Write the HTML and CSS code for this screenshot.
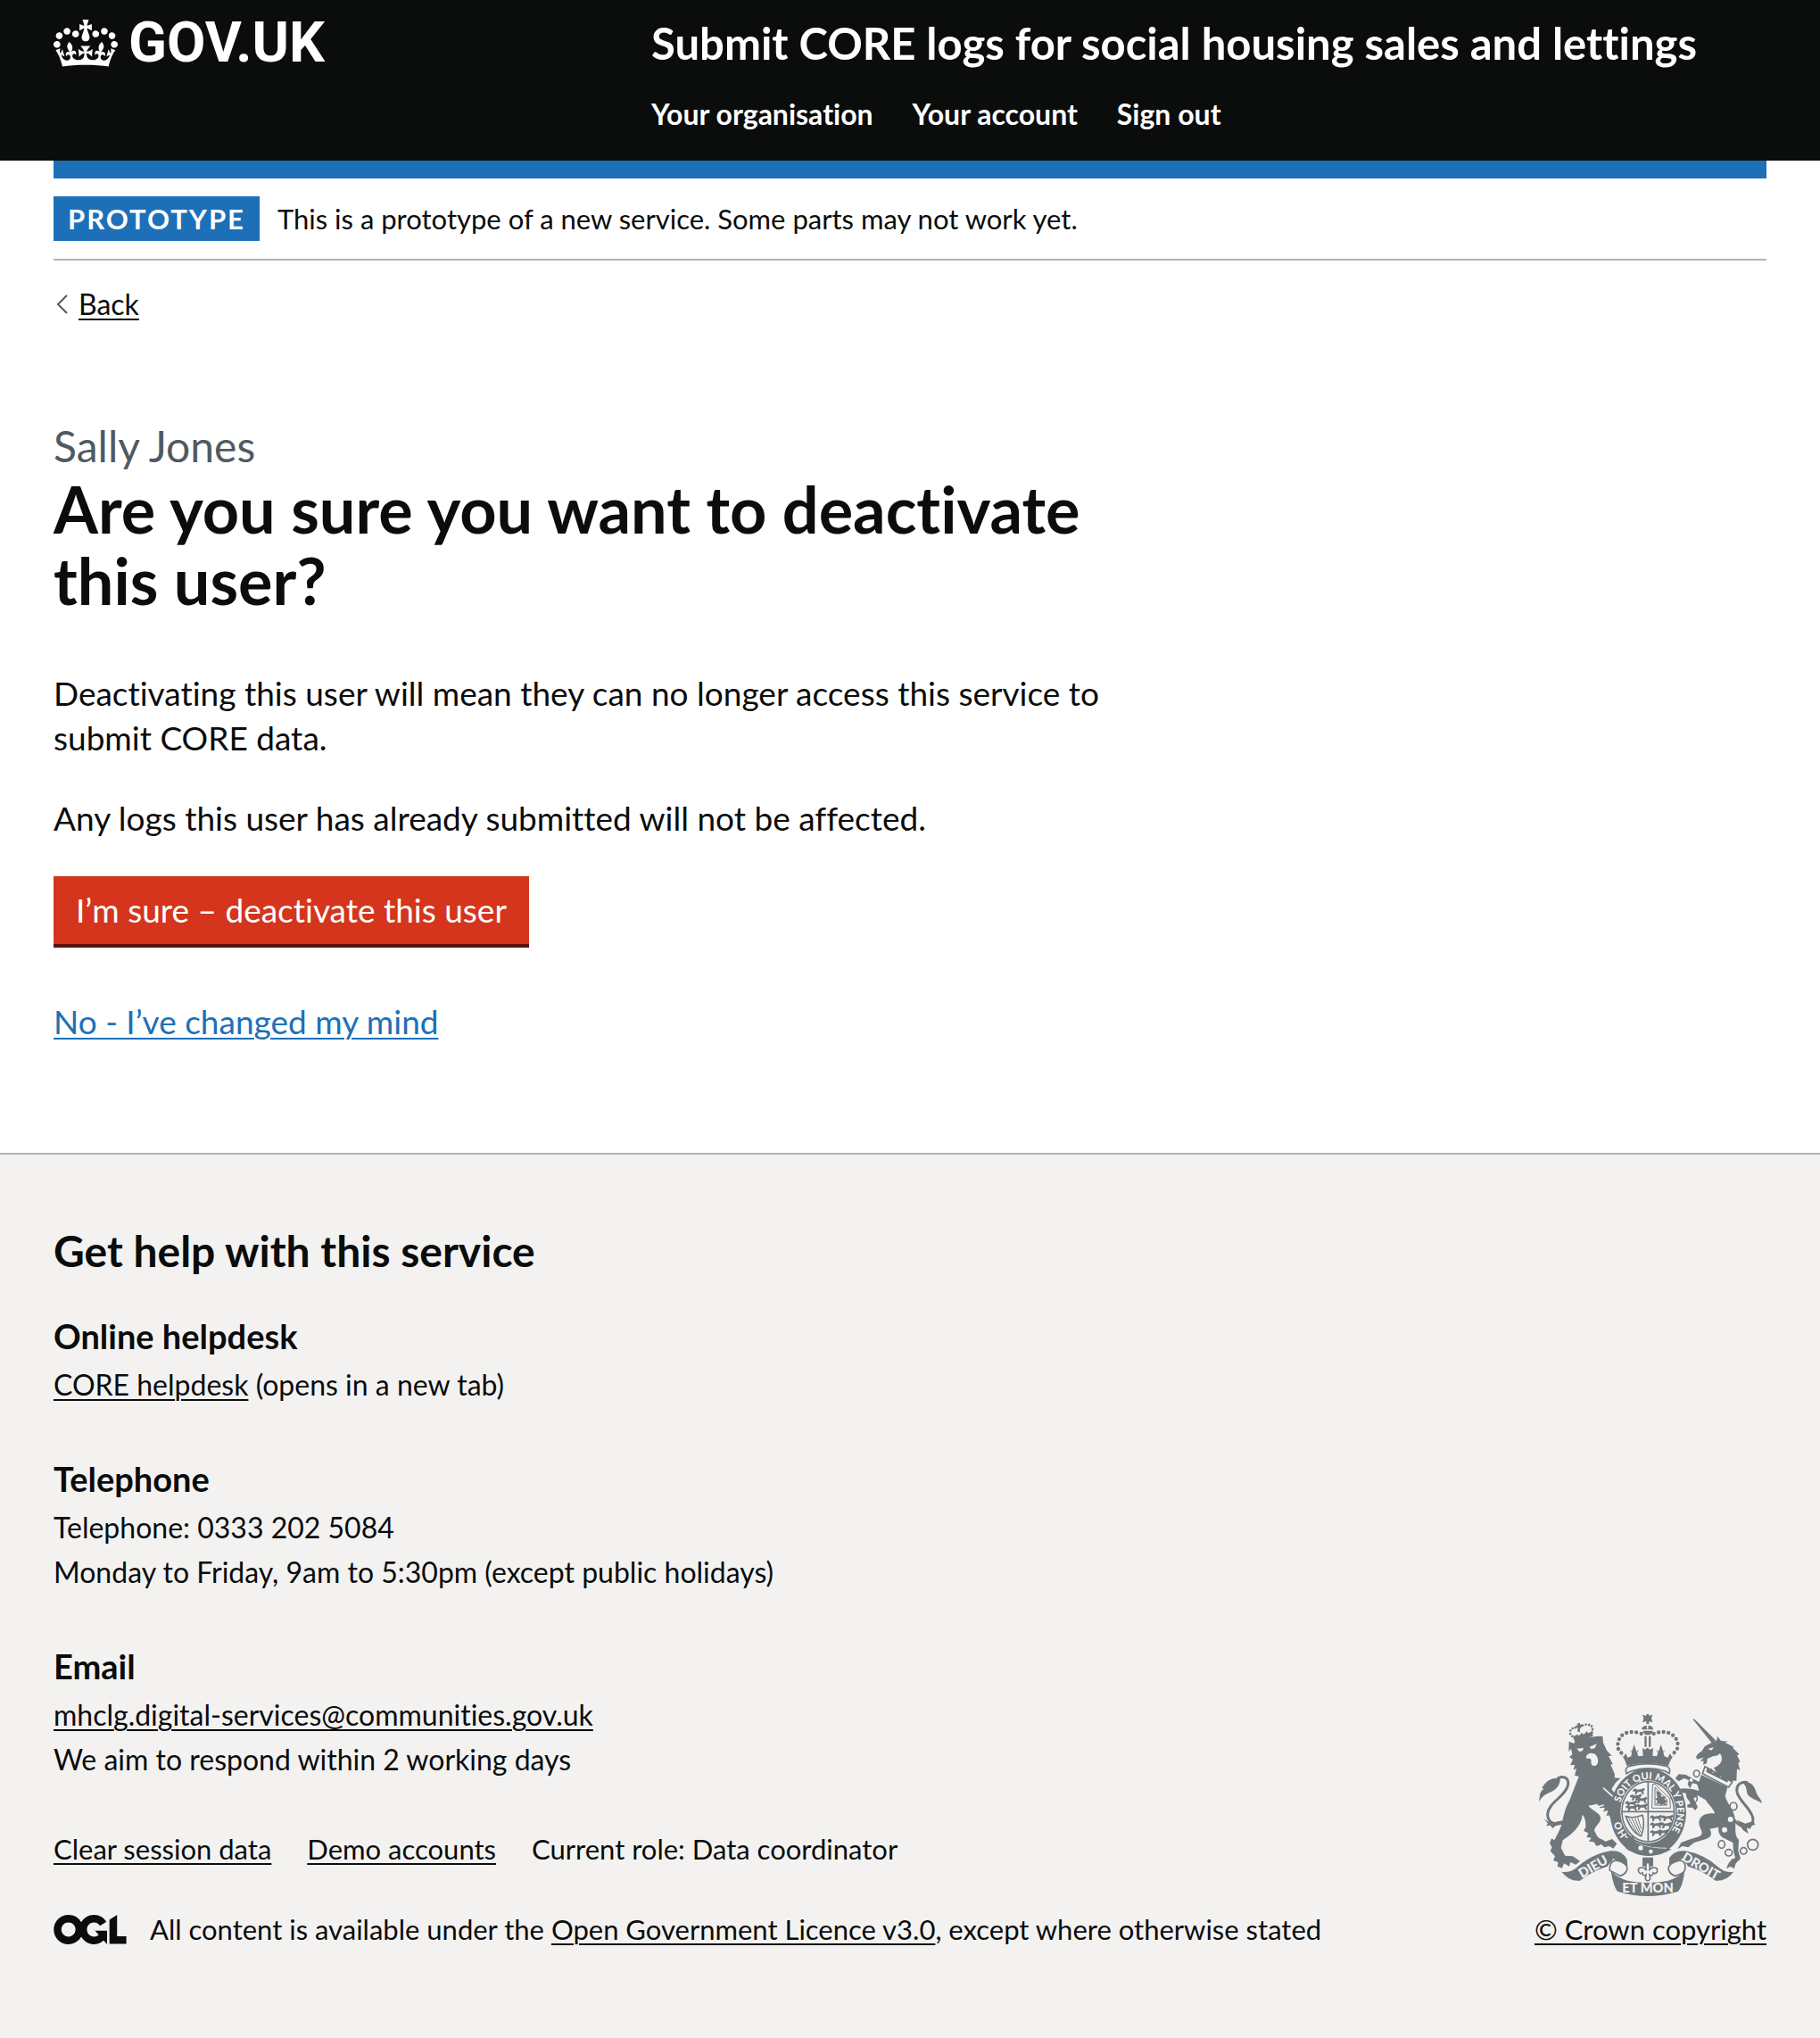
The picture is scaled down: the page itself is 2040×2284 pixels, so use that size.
FILE: index.html
```html
<!DOCTYPE html>
<html lang="en">
<head>
  <meta charset="utf-8">
  <meta name="viewport" content="width=device-width, initial-scale=1">
  <title>Are you sure you want to deactivate this user? - Submit CORE logs</title>
  <link rel="stylesheet" href="styles.css">
</head>
<body>
  <header class="header">
    <div class="header-inner">
      <a class="logo" href="#">
        <svg class="logo-crown" viewBox="0 0 132 97" aria-hidden="true"><path fill="currentColor" fill-rule="evenodd" d="M25 30.2c3.5 1.5 7.7-.2 9.1-3.7 1.5-3.6-.2-7.8-3.9-9.2-3.6-1.4-7.6.3-9.1 3.9-1.4 3.5.3 7.5 3.9 9zM9 39.5c3.6 1.5 7.8-.2 9.2-3.7 1.5-3.6-.2-7.8-3.9-9.1-3.6-1.5-7.6.2-9.1 3.8-1.4 3.5.3 7.5 3.8 9zM4.4 57.2c3.5 1.5 7.7-.2 9.1-3.8 1.5-3.6-.2-7.7-3.9-9.1-3.5-1.5-7.6.3-9.1 3.8-1.4 3.5.3 7.6 3.9 9.1zm38.3-21.4c3.5 1.5 7.7-.2 9.1-3.8 1.5-3.6-.2-7.7-3.9-9.1-3.6-1.5-7.6.3-9.1 3.8-1.3 3.6.4 7.7 3.9 9.1zm64.4-5.6c-3.6 1.5-7.8-.2-9.1-3.7-1.5-3.6.2-7.8 3.8-9.2 3.6-1.4 7.7.3 9.2 3.9 1.3 3.5-.4 7.5-3.9 9zm15.9 9.3c-3.6 1.5-7.7-.2-9.1-3.7-1.5-3.6.2-7.8 3.7-9.1 3.6-1.5 7.7.2 9.2 3.8 1.5 3.5-.3 7.5-3.8 9zm4.7 17.7c-3.6 1.5-7.8-.2-9.2-3.8-1.5-3.6.2-7.7 3.9-9.1 3.6-1.5 7.7.3 9.2 3.8 1.3 3.5-.4 7.6-3.9 9.1zM89.3 35.8c-3.6 1.5-7.8-.2-9.2-3.8-1.4-3.6.2-7.7 3.9-9.1 3.6-1.5 7.7.3 9.2 3.8 1.4 3.6-.3 7.7-3.9 9.1zM69.7 17.7l8.9 4.7V9.3l-8.9 2.8c-.2-.3-.5-.6-.9-.9L72.4 0H59.6l3.5 11.2c-.3.3-.6.5-.9.9l-8.8-2.8v13.1l8.8-4.7c.3.3.6.7.9.9l-5 15.4v.1c-.2.8-.4 1.6-.4 2.4 0 4.1 3.1 7.5 7 8.1h.2c.3 0 .7.1 1 .1.4 0 .7 0 1-.1h.2c4-.6 7.1-4.1 7.1-8.1 0-.8-.1-1.7-.4-2.4V34l-5.1-15.4c.4-.2.7-.6 1-.9zM66 92.8c16.9 0 32.8 1.1 47.1 3.2 4-16.9 8.9-26.7 14-33.5l-9.6-3.4c1 4.9 1.1 7.2 0 10.2-1.5-1.4-3-4.3-4.2-8.7L108.6 76c2.8-2 5-3.2 7.5-3.3-4.4 9.4-10 11.9-13.6 11.2-4.3-.8-6.3-4.6-5.6-7.9 1-4.7 5.7-5.9 8-.5 4.3-8.7-3-11.4-7.6-8.8 7.1-7.2 7.9-13.5 2.1-21.1-8 6.1-8.1 12.3-4.5 20.8-4.7-5.4-12.1-2.5-9.5 6.2 3.4-5.2 7.9-2 7.2 3.1-.6 4.3-6.4 7.8-13.5 7.2-10.3-.9-10.9-8-11.2-13.8 2.5-.5 7.1 1.8 11 7.3L80.2 60c-4.1 4.4-8 5.3-12.3 5.4 1.4-4.4 8-11.6 8-11.6H55.5s6.4 7.2 7.9 11.6c-4.2-.1-8-1-12.3-5.4l1.4 16.4c3.9-5.5 8.5-7.7 10.9-7.3-.3 5.8-.9 12.8-11.1 13.8-7.2.6-12.9-2.9-13.5-7.2-.7-5 3.8-8.3 7.1-3.1 2.7-8.7-4.6-11.6-9.4-6.2 3.7-8.5 3.6-14.7-4.6-20.8-5.8 7.6-5 13.9 2.2 21.1-4.7-2.6-11.9.1-7.7 8.8 2.3-5.5 7.1-4.2 8.1.5.7 3.3-1.3 7.1-5.7 7.9-3.5.7-9-1.8-13.5-11.2 2.5.1 4.7 1.3 7.5 3.3l-4.7-15.4c-1.2 4.4-2.7 7.2-4.3 8.7-1.1-3-.9-5.3 0-10.2l-9.5 3.4c5 6.9 9.9 16.7 14 33.5 14.8-2.1 30.8-3.2 47.7-3.2z"/></svg>
        <span class="logo-text">GOV.UK</span>
      </a>
      <div class="header-content">
        <a class="service-name" href="#">Submit CORE logs for social housing sales and lettings</a>
        <nav aria-label="Account">
          <ul class="nav-list">
            <li><a href="#">Your organisation</a></li>
            <li><a href="#">Your account</a></li>
            <li><a href="#">Sign out</a></li>
          </ul>
        </nav>
      </div>
    </div>
  </header>

  <div class="container">
    <div class="phase-banner">
      <strong class="tag">PROTOTYPE</strong>
      <span>This is a prototype of a new service. Some parts may not work yet.</span>
    </div>
    <a class="back-link" href="#">
      <svg class="back-icon" viewBox="0 0 13 22" aria-hidden="true"><path d="M12 1 2 11l10 10" fill="none" stroke="currentColor" stroke-width="2"/></svg>
      <span>Back</span>
    </a>
    <main class="main">
      <span class="caption">Sally Jones</span>
      <h1>Are you sure you want to deactivate this user?</h1>
      <p>Deactivating this user will mean they can no longer access this service to submit CORE data.</p>
      <p>Any logs this user has already submitted will not be affected.</p>
      <button class="button" type="button">I’m sure – deactivate this user</button>
      <p class="cancel"><a href="#">No - I’ve changed my mind</a></p>
    </main>
  </div>

  <footer class="footer">
    <div class="container footer-inner">
      <div class="footer-main">
        <h2>Get help with this service</h2>
        <section>
          <h3>Online helpdesk</h3>
          <p><a href="#">CORE helpdesk</a> (opens in a new tab)</p>
        </section>
        <section>
          <h3>Telephone</h3>
          <p>Telephone: 0333 202 5084</p>
          <p>Monday to Friday, 9am to 5:30pm (except public holidays)</p>
        </section>
        <section>
          <h3>Email</h3>
          <p><a href="#">mhclg.digital-services@communities.gov.uk</a></p>
          <p>We aim to respond within 2 working days</p>
        </section>
        <ul class="footer-links">
          <li><a href="#">Clear session data</a></li>
          <li><a href="#">Demo accounts</a></li>
          <li>Current role: Data coordinator</li>
        </ul>
        <div class="licence">
          <svg class="licence-logo" viewBox="0 0 484 196" aria-hidden="true"><path fill="currentColor" d="M421.5 142.8V.1l-50.7 32.3v161.1h112.4v-50.7zm-122.3-9.6A47.12 47.12 0 0 1 221 97.8c0-26 21.1-47.1 47.1-47.1 16.7 0 31.4 8.7 39.7 21.8l42.7-27.2A97.63 97.63 0 0 0 268.1 0c-36.5 0-68.3 20.1-85.1 49.7A98 98 0 0 0 97.8 0C43.9 0 0 43.9 0 97.8s43.9 97.8 97.8 97.8c36.5 0 68.3-20.1 85.1-49.7a97.76 97.76 0 0 0 149.6 25.4l19.4 22.2h3v-87.8h-80l24.3 27.5zM97.8 145c-26 0-47.1-21.1-47.1-47.1s21.1-47.1 47.1-47.1 47.1 21.1 47.1 47.1S123.8 145 97.8 145"/></svg>
          <span>All content is available under the <a href="#">Open Government Licence v3.0</a>, except where otherwise stated</span>
        </div>
      </div>
      <a class="copyright" href="#">
        <svg class="arms" viewBox="102 60 750 612" aria-hidden="true">
          <defs>
            <path id="garter" d="M469 499A97 110 0 0 1 469 279A97 110 0 0 1 469 499"/>
            <path id="lion-rampant" d="M0 4l8-4 6 4 14-2 10-4 2 6-6 6 4 8-6 2-4-8-12 0-4 8-6 0 2-10-8 0z"/>
          </defs>
          <!-- lion -->
          <path class="ink" d="M203 152 218 158 250 142 300 134 316 134 318 156 330 182 347 200 336 201 350 228 343 230 357 262 356 274 376 276 360 290 346 312 368 342 380 380 381 410 370 402 364 416 354 400 345 416 338 400 329 403 334 384 318 388 324 374 308 376 298 362 268 368C284 386 306 392 309 408C311 426 290 436 288 452L300 474 326 488 348 480 364 496 352 512 338 504 322 508 312 498 296 504 286 490 270 488 278 476 262 474 268 460 252 452 259 440C260 415 254 404 248 398C246 425 230 452 182 484L176 510 190 536 216 538 240 554 226 566 208 558 204 572 186 562 180 578 164 572 166 558 150 552 156 538 140 520 146 508 138 494 144 478 154 484 170 452C184 424 182 390 204 352L236 270 222 266 228 242 218 248 222 230 207 232 216 212 204 204 214 196 210 176 202 186z"/>
          <path class="paper" d="M229 176 252 174 248 184 238 186zM272 170 296 160 290 174 278 178zM262 200c8-12 16-10 28-6 8 6 12 18 10 28-2 14-16 16-22 6-2-8 2-12-4-18-6-2-12 0-14-2z"/>
          <path class="paper-line" d="M318 308 360 346M300 372 320 366"/>
          <path class="line-thick" d="M182 424C158 436 130 426 131 396C134 356 196 334 200 296C202 272 182 266 164 276"/>
          <path class="ink" d="M102 354C106 334 102 322 118 312L112 308C128 280 150 272 174 276C172 304 156 318 132 326C116 334 110 342 102 354zM118 412 134 422 150 424 190 416 176 430 158 436 148 444 140 434 126 436 132 428z"/>
          <!-- lion's crown -->
          <path class="ink" d="M220 136 280 120 284 134 222 156zM216 136 232 128 236 134 246 122 252 130 264 116 266 126 282 116 280 132 222 148z"/>
          <path class="ink" d="M232 90 240 90 240 120 232 120zM226 98 248 94 248 102 228 106z"/>
          <path class="beads-small" d="M222 142 207 128 208 114 220 104 234 108M240 104 250 98 264 94 278 98 282 110 280 126"/>
          <!-- crown -->
          <path class="ink" d="M450 62 462 66 472 66 484 62 480 74 484 88 472 84 462 84 450 88 454 74zM463 60h9v34h-9zM448 108a20 14 0 0 1 38 0v4h-38zM452 116h32c0 10-8 14-16 14s-16-4-16-14zM457 134h7v36h-7zM471 134h7v36h-7z"/>
          <path class="paper-line" d="M467 94v16"/>
          <path class="beads" d="M446 126 422 119 398 122 377 134 367 154 368 176 380 192M488 126 512 119 536 122 558 134 569 154 567 176 555 192"/>
          <path class="ink" d="M376 190 386 204 394 192 400 206 412 202 414 190 408 180 414 186 422 162 430 186 438 180 432 190 436 202 452 200 450 174 460 180 464 174 470 174 474 180 486 174 484 200 498 202 502 190 496 180 504 186 512 162 520 186 528 180 520 190 524 202 536 206 542 192 550 204 560 190C548 210 540 222 537 234Q467 216 397 234C394 220 386 206 376 190z"/>
          <path class="line" d="M402 236Q467 218 534 236Q546 246 540 260L528 252Q467 232 406 254L396 260Q390 244 402 236z"/>
          <!-- garter and shield -->
          <ellipse class="ink" cx="469" cy="390" rx="128" ry="147"/>
          <ellipse class="paper" cx="469" cy="388" rx="93" ry="106"/>
          <ellipse class="line" cx="469" cy="388" rx="88" ry="101"/>
          <path class="line" d="M381 388H557M469 287V489"/>
          <path class="line-thin" d="M484 296h8l50 48 2 32h-62zM492 306l40 42v18h-40z"/>
          <path class="ink" d="M496 318l14 6 4 14 14-2-4 10 10 8-8 4 4 10-12-6-8 6-2-8-12 4 4-12-8-8 8-2z"/>
          <g class="ink">
            <use href="#lion-rampant" x="418" y="310"/><use href="#lion-rampant" x="408" y="330"/><use href="#lion-rampant" x="392" y="352"/><use href="#lion-rampant" x="426" y="340"/><use href="#lion-rampant" x="428" y="362"/><use href="#lion-rampant" x="394" y="366"/>
            <use href="#lion-rampant" x="476" y="400"/><use href="#lion-rampant" x="514" y="400"/><use href="#lion-rampant" x="476" y="424"/><use href="#lion-rampant" x="510" y="424"/><use href="#lion-rampant" x="476" y="450"/><use href="#lion-rampant" x="500" y="448"/>
          </g>
          <path class="line" d="M394 404Q420 412 450 400Q460 430 446 470Q416 462 394 404z"/>
          <path class="line-thin" d="M404 410 434 464M414 410 440 462M424 409 444 458M434 408 446 446"/>
          <path class="paper-line" d="M392 470Q440 514 530 512"/>
          <path class="ink" d="M396 476 420 474 428 492Q470 512 530 512L548 514Q500 546 440 530L412 522 394 512 404 498z"/>
          <path class="line" d="M418 472Q392 480 398 506Q400 520 418 514"/>
          <circle class="paper" cx="444" cy="510" r="8"/><circle class="paper" cx="478" cy="522" r="7"/>
          <text class="motto"><textPath href="#garter" startOffset="80">HO <tspan dx="54">SOIT QUI MAL Y PENSE</tspan></textPath></text>
          <!-- unicorn -->
          <path class="ink" d="M618 76 626 78 696 148 684 158z"/>
          <path class="ink" d="M630 204 636 194 650 184 660 168 690 152 700 148 702 134 714 150 738 152 728 156 760 172 752 172 776 196 768 198 778 220 772 224 778 250 768 244 766 284 742 284 700 258 690 240C716 232 724 208 710 192C702 204 690 198 682 204L668 210 666 226 654 230 656 218 644 218 656 206 634 212z"/>
          <path class="paper" d="M670 176 690 172 682 182z"/>
          <path class="paper-fill-line" d="M660 236 752 288 740 306 652 260z"/>
          <path class="ink" d="M664 254 668 240 676 248 684 242 686 258 696 254 704 260 712 256 712 272 722 268 730 274 740 272 736 290z"/>
          <path class="ink" d="M648 264 736 306 728 336C736 362 756 380 761 410C766 440 756 466 774 482L772 520 780 546 764 562 758 580 746 572 732 580 738 564 750 548 762 544 756 520 754 492 722 476C706 466 704 452 706 440L676 446C686 466 680 474 664 480L624 492 604 508 584 504 568 514 580 492 606 482 640 472C662 460 640 446 640 424C642 400 664 392 694 394C686 374 668 360 662 348L636 334 622 344 636 372 628 384 618 374 602 374 600 366 612 360 598 340 596 326 578 324 570 312 590 310 618 312 640 318 634 296 618 292 610 310 602 296 606 282 590 276 572 286 560 276 572 262 596 264 622 278 640 288z"/>
          <g class="discs">
            <ellipse cx="632" cy="260" rx="10" ry="11"/><ellipse cx="622" cy="344" rx="12" ry="13"/><ellipse cx="756" cy="370" rx="12" ry="13"/><ellipse cx="716" cy="498" rx="11" ry="13"/><ellipse cx="740" cy="526" rx="12" ry="11"/><ellipse cx="790" cy="520" rx="11" ry="11"/><circle cx="821" cy="499" r="18"/>
          </g>
          <circle class="paper" cx="746" cy="414" r="9"/><circle class="paper" cx="726" cy="449" r="9"/><circle class="paper" cx="614" cy="282" r="6"/>
          <path class="line-thick" d="M800 446C770 430 758 420 762 414M804 290C780 284 764 300 768 322C776 356 820 380 822 414C822 436 800 444 776 426"/>
          <path class="ink" d="M786 290C810 284 826 296 832 322C838 340 850 346 852 360C838 350 822 348 806 334C796 320 806 306 786 290zM768 416 796 428 822 420 830 432 818 434 812 446 800 442 806 462 788 450z"/>
          <!-- pendant and scrolls -->
          <path class="ink" d="M450 542h36v30h-36z"/>
          <path class="paper-fill-line" d="M468 554C458 568 460 578 464 586C456 574 438 572 436 584C436 594 444 598 450 594C450 604 458 604 462 600L460 614Q468 628 476 614L474 600C478 604 486 604 486 594C492 598 502 594 500 584C498 572 480 574 472 586C476 578 478 568 468 554z"/>
          <path class="ink" d="M178 590Q206 594 226 578Q280 530 342 520Q380 516 398 548L400 570 352 546 332 572Q280 588 240 620Q204 624 178 590zM756 590Q730 594 710 578Q656 530 594 520Q558 516 540 544L540 566 584 546 604 572Q656 588 696 620Q734 622 756 590z"/>
          <path class="paper-fill-line" d="M344 562Q352 546 376 556Q402 566 398 584Q392 600 374 604Q350 590 340 586Q338 574 344 562zM592 562Q584 546 562 556Q534 566 538 584Q544 600 560 604Q586 596 592 586Q596 574 592 562z"/>
          <path class="ink" d="M344 588Q372 614 400 620Q467 634 536 620Q572 610 592 586Q586 640 570 656Q467 688 366 656Q352 640 344 588z"/>
          <text class="scroll" transform="translate(246 612) rotate(-30)">DIEU</text>
          <text class="scroll" transform="translate(382 660)">ET MON</text>
          <text class="scroll" transform="translate(580 550) rotate(30)">DROIT</text>
        </svg>
        <span>© Crown copyright</span>
      </a>
    </div>
  </footer>
</body>
</html>
```
FILE: styles.css
```css
* {
  box-sizing: border-box;
}

body {
  margin: 0;
  background: #ffffff;
  color: #0b0c0c;
  font-family: Lato, "Liberation Sans", sans-serif;
  font-size: 32px;
  line-height: 50px;
  font-variant-ligatures: none;
}

h1,
h2,
h3,
p,
ul {
  margin: 0;
  padding: 0;
}

ul {
  list-style: none;
}

a {
  color: inherit;
  text-decoration-thickness: 2px;
  text-underline-offset: 4px;
}

.container {
  margin: 0 60px;
}

/* Header */
.header {
  background: #0b0c0c;
  color: #ffffff;
}

.header-inner {
  display: grid;
  grid-template-columns: 1fr 2fr;
  margin: 0 60px;
  padding: 18px 0 32px;
}

.header a {
  text-decoration: none;
}

.logo {
  display: flex;
  align-items: center;
  align-self: start;
  gap: 12px;
}

.logo-crown {
  width: 72px;
  height: 53px;
}

.logo-text {
  font: 700 63px/60px Roboto, "Liberation Sans", sans-serif;
}

.header-content {
  padding-left: 30px;
}

.service-name {
  display: block;
  font-size: 49px;
  font-weight: 700;
  line-height: 60px;
}

.nav-list {
  display: flex;
  flex-wrap: wrap;
  gap: 10px 44px;
  margin-top: 30px;
  font-weight: 700;
  line-height: 40px;
}

/* Phase banner */
.phase-banner {
  display: flex;
  align-items: center;
  gap: 20px;
  padding: 20px 0;
  border-top: 20px solid #1d70b8;
  border-bottom: 2px solid #b1b4b6;
  font-size: 31px;
}

.tag {
  padding: 0 16px;
  background: #1d70b8;
  color: #ffffff;
  letter-spacing: 2px;
}

.back-link {
  display: inline-flex;
  align-items: center;
  gap: 12px;
  margin-top: 29px;
  padding-left: 3px;
  line-height: 40px;
  text-decoration: none;
}

.back-link span {
  text-decoration: underline 2px;
  text-underline-offset: 4px;
}

.back-icon {
  width: 13px;
  height: 22px;
  color: #505a5f;
}

/* Main content */
.main {
  max-width: 1260px;
  padding: 105px 0 122px;
  font-size: 37px;
}

.caption {
  display: block;
  color: #505a5f;
  font-size: 48px;
  line-height: 60px;
}

h1 {
  margin-bottom: 62px;
  font-size: 72px;
  line-height: 80px;
}

.main p {
  margin-bottom: 40px;
}

.button {
  display: block;
  margin: 0 0 62px;
  padding: 13px 25px;
  border: 0;
  background: #d4351c;
  box-shadow: 0 4px 0 #55150b;
  color: #ffffff;
  font: inherit;
  font-size: 37px;
  line-height: 50px;
}

.main .cancel {
  margin: 0;
  color: #1d70b8;
}

/* Footer */
.footer {
  border-top: 2px solid #b1b4b6;
  background: #f3f2f1;
}

.footer-inner {
  display: flex;
  justify-content: space-between;
  align-items: flex-end;
  gap: 60px;
  padding: 78px 0 97px;
}

h2 {
  margin-bottom: 40px;
  font-size: 48px;
  line-height: 60px;
}

h3 {
  margin-bottom: 5px;
  font-size: 38px;
  line-height: 50px;
}

.footer-main section {
  margin-bottom: 55px;
}

.footer-main section:last-of-type {
  margin-bottom: 50px;
}

.footer-links {
  display: flex;
  flex-wrap: wrap;
  gap: 10px 40px;
  margin-bottom: 40px;
  font-size: 31px;
}

.licence {
  display: flex;
  align-items: center;
  gap: 26px;
  font-size: 31px;
}

.licence-logo {
  flex: none;
  width: 82px;
  height: 33px;
}

.copyright {
  display: flex;
  flex-direction: column;
  flex: none;
  align-items: center;
  gap: 12px;
  font-size: 31px;
}

/* Royal coat of arms */
.arms {
  width: 250px;
  height: 204px;
}

.ink {
  fill: #6f777b;
}

.paper {
  fill: #f3f2f1;
}

.line,
.line-thin,
.line-thick,
.discs {
  fill: none;
  stroke: #6f777b;
  stroke-width: 5;
}

.line-thin {
  stroke-width: 3;
}

.line-thick {
  stroke-width: 9;
}

.paper-line {
  fill: none;
  stroke: #f3f2f1;
  stroke-width: 5;
}

.paper-fill-line {
  fill: #f3f2f1;
  stroke: #6f777b;
  stroke-width: 5;
}

.beads,
.beads-small {
  fill: none;
  stroke: #6f777b;
  stroke-linecap: round;
  stroke-width: 13;
  stroke-dasharray: 0 17;
}

.beads-small {
  stroke-width: 8;
  stroke-dasharray: 0 11;
}

.motto,
.scroll {
  fill: #f3f2f1;
  font-size: 33px;
  font-weight: 900;
}

.scroll {
  font-size: 44px;
}
```
